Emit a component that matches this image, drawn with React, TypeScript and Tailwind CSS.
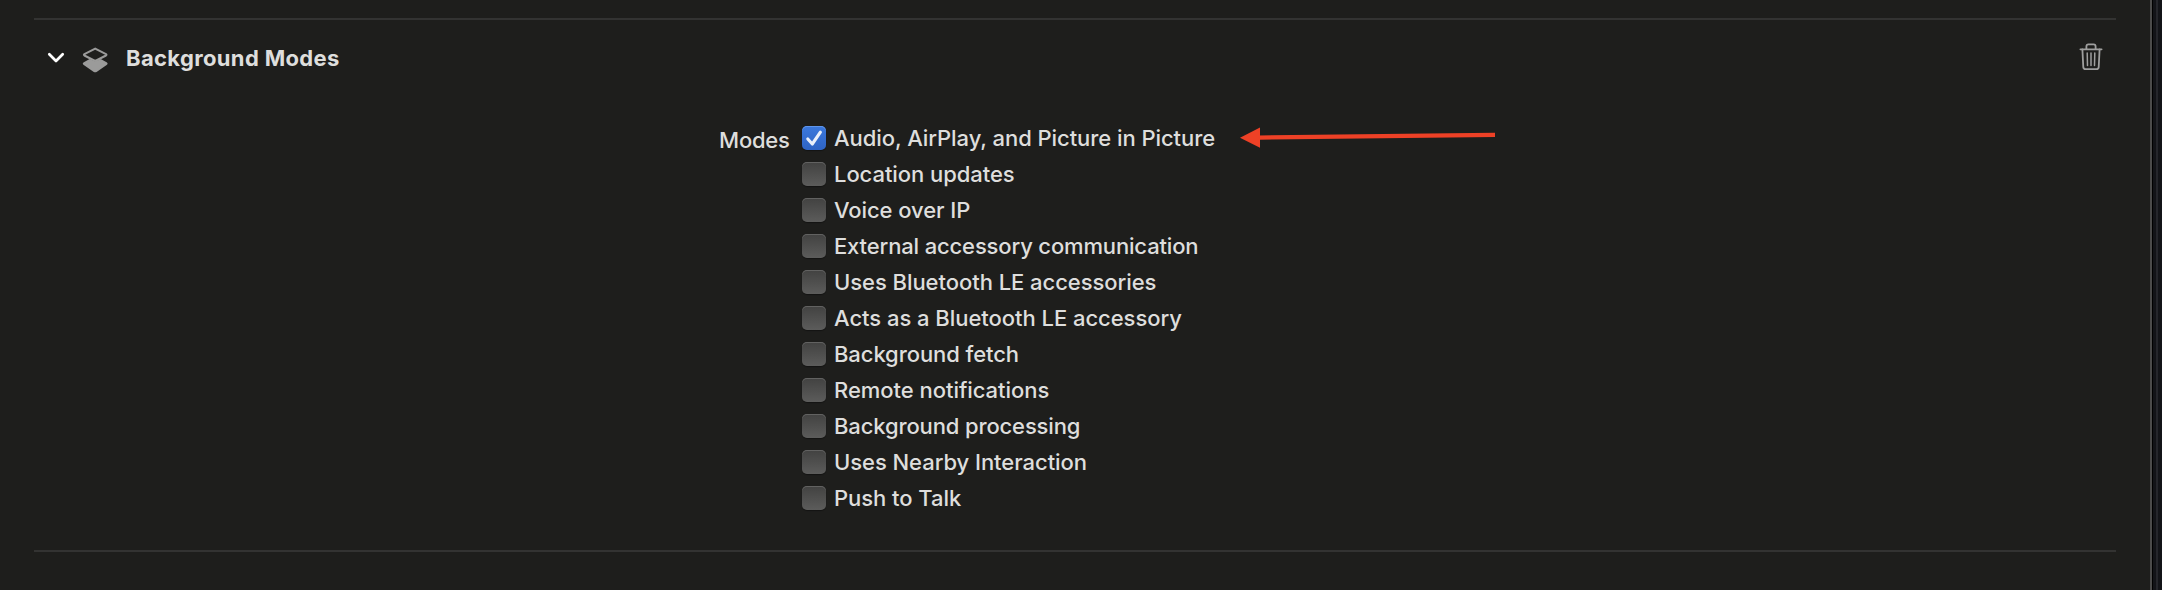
const modes = [
  { label: "Audio, AirPlay, and Picture in Picture", checked: true, tracking: "tracking-[-0.06px]" },
  { label: "Location updates", checked: false, tracking: "tracking-[-0.06px]" },
  { label: "Voice over IP", checked: false, tracking: "tracking-[-0.08px]" },
  { label: "External accessory communication", checked: false, tracking: "tracking-[-0.15px]" },
  { label: "Uses Bluetooth LE accessories", checked: false, tracking: "tracking-[-0.05px]" },
  { label: "Acts as a Bluetooth LE accessory", checked: false, tracking: "tracking-[-0.04px]" },
  { label: "Background fetch", checked: false, tracking: "tracking-[-0.08px]" },
  { label: "Remote notifications", checked: false, tracking: "tracking-[-0.04px]" },
  { label: "Background processing", checked: false, tracking: "tracking-[-0.13px]" },
  { label: "Uses Nearby Interaction", checked: false, tracking: "tracking-[-0.05px]" },
  { label: "Push to Talk", checked: false, tracking: "tracking-[-0.05px]" },
];

function Checkbox({ checked }: { checked: boolean }) {
  return checked ? (
    <span className="size-6 shrink-0 rounded-[5px] bg-linear-to-b from-[#3b78dc] to-[#2f64c4] shadow-[inset_0_1px_0_#5f95ea,0_1px_1px_rgba(0,0,0,0.35)]">
      <svg viewBox="0 0 24 24" className="size-6" fill="none" stroke="#eaf0fa" strokeWidth="3.1" strokeLinecap="round" strokeLinejoin="round">
        <path d="M5.8 13L10.3 18L18.4 6.2" />
      </svg>
    </span>
  ) : (
    <span className="size-6 shrink-0 rounded-[5px] bg-linear-to-b from-[#424241] to-[#5c5c5b] shadow-[inset_0_1px_0_#626261,0_1px_1px_rgba(0,0,0,0.35)]" />
  );
}

export default function App() {
  return (
    <div className="flex h-[590px] w-[2162px] overflow-hidden bg-[#1e1e1c] font-['Inter',sans-serif] text-[22px] leading-[36px] text-[#dededd]">
      <main className="flex w-[2150px] flex-col pt-[18px] pr-[34px] pl-[34px]">
        <div className="h-0.5 shrink-0 bg-[#333332]" />
        <header className="flex h-[76px] items-center">
          <svg viewBox="0 0 20 14" className="ml-3 h-3.5 w-5" fill="none" stroke="#ffffff" strokeWidth="2.7" strokeLinecap="round" strokeLinejoin="round">
            <path d="M3.3 3.2L10 10L16.7 3.2" />
          </svg>
          <svg viewBox="0 0 28 28" className="mt-[3px] ml-[15px] size-7">
            <path d="M14.2 2.6L25 8.1Q26 8.8 25 9.5L14.2 15L3.4 9.5Q2.4 8.8 3.4 8.1Z" fill="none" stroke="#9b9b9a" strokeWidth="2" strokeLinejoin="round" />
            <path d="M8.6 13L14.2 15.6L19.8 13L26 16.4Q27.4 17.6 26 18.8L15.6 25.9Q14.2 26.7 12.8 25.9L2.4 18.8Q1 17.6 2.4 16.4Z" fill="#9b9b9a" />
          </svg>
          <h1 className="ml-[17px] text-[22px] leading-[36px] font-bold tracking-[0.35px]">Background Modes</h1>
          <svg viewBox="0 0 24 28" className="mb-[2px] mr-[13px] ml-auto h-7 w-6" fill="none" stroke="#9f9f9e" strokeWidth="1.8" strokeLinecap="round" strokeLinejoin="round">
            <path d="M1.4 6.3H22.6" />
            <path d="M7.4 6V3.4Q7.4 1.4 9.4 1.4H14.6Q16.6 1.4 16.6 3.4V6" />
            <path d="M3.4 6.5L4.3 24.2Q4.5 26.2 6.5 26.2H17.5Q19.5 26.2 19.7 24.2L20.6 6.5" />
            <path d="M8.2 10L8.5 22.6M12 10V22.6M15.8 10L15.5 22.6" strokeWidth="1.5" />
          </svg>
        </header>
        <section className="flex pt-6 pl-[685px]">
          <h2 className="mt-[2px] w-[83px] shrink-0 leading-[36px] font-medium tracking-[-0.2px]">Modes</h2>
          <ul className="flex flex-col">
            {modes.map((mode) => (
              <li key={mode.label} className="flex h-9 items-center gap-2">
                <Checkbox checked={mode.checked} />
                <span className={`whitespace-nowrap font-medium ${mode.tracking}`}>{mode.label}</span>
              </li>
            ))}
          </ul>
          <svg viewBox="0 0 256 24" className="mt-[5px] ml-[25px] h-6 w-64">
            <path d="M19 12.6L255 9.8" stroke="#ee4126" strokeWidth="4.2" fill="none" />
            <path d="M0 12.8L20 2.6V22.8Z" fill="#ee4126" />
          </svg>
        </section>
        <div className="mt-auto mb-[38px] h-0.5 shrink-0 bg-[#333332]" />
      </main>
      <aside className="flex w-3">
        <div className="w-0.5 bg-[#4b4b4a]" />
        <div className="w-px bg-black" />
        <div className="w-[3px] bg-[#121317]" />
        <div className="w-0.5 bg-[#25262b]" />
        <div className="w-1 bg-[#131418]" />
      </aside>
    </div>
  );
}
